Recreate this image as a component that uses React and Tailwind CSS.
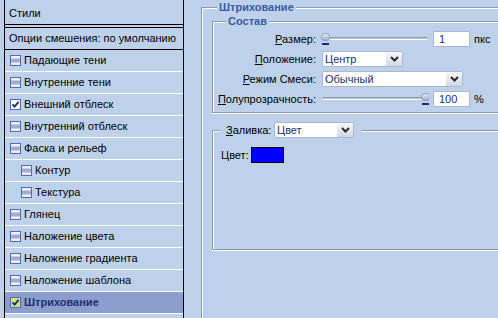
import React from "react";

const BG = "bg-[#bed1ea]";

function Box({ state }) {
  const fill = state === "sel" ? "#cfe57c" : state === "on" ? "#ffffff" : "#eef1f8";
  return (
    <svg width="11" height="11" viewBox="0 0 11 11" className="shrink-0">
      <rect x="0.5" y="0.5" width="10" height="10" fill={fill} stroke="#4f69b3" />
      {state === "off" && (
        <>
          <rect x="1" y="3" width="9" height="1" fill="#c9cfe0" />
          <rect x="1" y="4" width="9" height="3" fill="#a3acc9" />
          <rect x="1" y="7" width="9" height="1" fill="#c9cfe0" />
        </>
      )}
      {state !== "off" && (
        <path d="M2.5 5.3 L4.6 7.6 L8.6 2.8" fill="none" stroke="#1d2c74" strokeWidth="1.9" />
      )}
    </svg>
  );
}

function Row({ label, state = "off", indent = false, selected = false }) {
  return (
    <div
      className={`h-[22px] shrink-0 border-b border-white flex items-center gap-[3px] ${
        indent ? "pl-[16px]" : "pl-[5px]"
      } ${selected ? "bg-[#8c9ece] font-bold text-[#1d2f70]" : ""}`}
    >
      <Box state={selected ? "sel" : state} />
      <span className="pb-px">{label}</span>
    </div>
  );
}

function Slider({ pos }) {
  return (
    <svg width="108" height="16" viewBox="0 0 108 16" className="shrink-0">
      <defs>
        <linearGradient id={`th${pos}`} x1="0" y1="0" x2="0" y2="1">
          <stop offset="0" stopColor="#e8edf5" />
          <stop offset="1" stopColor="#9eabc6" />
        </linearGradient>
      </defs>
      <rect x="2" y="6" width="104" height="1" fill="#8d9ab2" />
      <rect x="2" y="7" width="104" height="1" fill="#b7c2d4" />
      <rect x="2" y="8" width="104" height="1" fill="#ffffff" />
      <g transform={`translate(${pos},0)`}>
        <rect x="0.5" y="2.5" width="8" height="7" rx="3" fill={`url(#th${pos})`} stroke="#8c9ab8" />
        <rect x="1" y="12" width="7" height="2" fill="#1e2c6e" />
      </g>
    </svg>
  );
}

function Select({ w, value }) {
  return (
    <div className={`${w} h-[16px] shrink-0 flex bg-white border border-[#a9b7d3] rounded-[2px]`}>
      <div className="flex-1 pl-[2px] leading-[14px] text-[#1c2f6e]">{value}</div>
      <div className="w-[16px] flex items-center justify-center bg-gradient-to-b from-[#f6f7fa] to-[#d2d8e5]">
        <svg width="9" height="6" viewBox="0 0 9 6">
          <path d="M1 1 L4.5 4.5 L8 1" fill="none" stroke="#2a2a2a" strokeWidth="2" />
        </svg>
      </div>
    </div>
  );
}

function Input({ value }) {
  return (
    <div className="ml-[4px] w-[37px] h-[16px] shrink-0 bg-white border border-[#a9b7d3] pl-[5px] leading-[14px] text-[#1c2f6e]">
      {value}
    </div>
  );
}

function Label({ first, rest }) {
  return (
    <div className="w-[103px] shrink-0 text-right">
      <u>{first}</u>
      {rest}
    </div>
  );
}

export default function App() {
  return (
    <div className={`w-[498px] h-[318px] overflow-hidden ${BG} flex font-['Liberation_Sans',Arial,sans-serif] text-[11px] leading-[13px] text-black`}>
      {/* Left list */}
      <div className="ml-[4px] w-[180px] h-full shrink-0 border-x border-black flex flex-col">
        <div className="h-[24px] shrink-0 flex items-center pt-[2px] pl-[4px]">Стили</div>
        <div className="h-[4px] shrink-0 border-y border-black" />
        <div className="h-[22px] shrink-0 flex items-center pl-[4px] border-b border-black">
          Опции смешения: по умолчанию
        </div>
        <Row label="Падающие тени" />
        <Row label="Внутренние тени" />
        <Row label="Внешний отблеск" state="on" />
        <Row label="Внутренний отблеск" />
        <Row label="Фаска и рельеф" />
        <Row label="Контур" indent />
        <Row label="Текстура" indent />
        <Row label="Глянец" />
        <Row label="Наложение цвета" />
        <Row label="Наложение градиента" />
        <Row label="Наложение шаблона" />
        <Row label="Штрихование" selected />
      </div>

      <div className="w-[17px] shrink-0" />

      {/* Right settings */}
      <div className="flex-1 mt-[7px] border-t border-l border-[#8797b8] shadow-[inset_1px_1px_0_#fff] flex flex-col">
        <div className={`-mt-[7px] ml-[15px] w-fit px-[2px] ${BG} font-bold text-[#3a5b9f]`}>Штрихование</div>

        <div className="ml-[10px] mt-[7px] h-[92px] shrink-0 border-t border-l border-b border-[#8797b8] shadow-[inset_1px_1px_0_#fff,0_1px_0_#fff] flex flex-col">
          <div className={`-mt-[7px] ml-[13px] w-fit px-[2px] ${BG} font-bold text-[#3a5b9f]`}>Состав</div>
          <div className="mt-px flex flex-col">
            <div className="h-[20px] flex items-center">
              <Label first="Р" rest="азмер:" />
              <div className="ml-[5px] flex items-center">
                <Slider pos={0} />
              </div>
              <Input value="1" />
              <span className="ml-[4px]">пкс</span>
            </div>
            <div className="h-[20px] flex items-center">
              <Label first="П" rest="оложение:" />
              <div className="ml-[6px]">
                <Select w="w-[81px]" value="Центр" />
              </div>
            </div>
            <div className="h-[20px] flex items-center">
              <Label first="Р" rest="ежим Смеси:" />
              <div className="ml-[6px]">
                <Select w="w-[141px]" value="Обычный" />
              </div>
            </div>
            <div className="h-[20px] flex items-center">
              <Label first="П" rest="олупрозрачность:" />
              <div className="ml-[5px] flex items-center">
                <Slider pos={100} />
              </div>
              <Input value="100" />
              <span className="ml-[4px]">%</span>
            </div>
          </div>
        </div>

        <div className="ml-[10px] mt-[17px] h-[120px] shrink-0 border-t border-l border-b border-[#8797b8] shadow-[inset_1px_1px_0_#fff,0_1px_0_#fff] flex flex-col">
          <div className={`-mt-[9px] ml-[7px] w-fit h-[16px] pl-[6px] pr-[7px] ${BG} flex items-center`}>
            <div className="w-[48px] shrink-0">
              <u>З</u>аливка:
            </div>
            <Select w="w-[80px]" value="Цвет" />
          </div>
          <div className="mt-[9px] ml-[8px] flex items-center">
            <div className="w-[30px] shrink-0">Цвет:</div>
            <div className="w-[33px] h-[16px] bg-[#0000ff] border border-black" />
          </div>
        </div>
      </div>
    </div>
  );
}
